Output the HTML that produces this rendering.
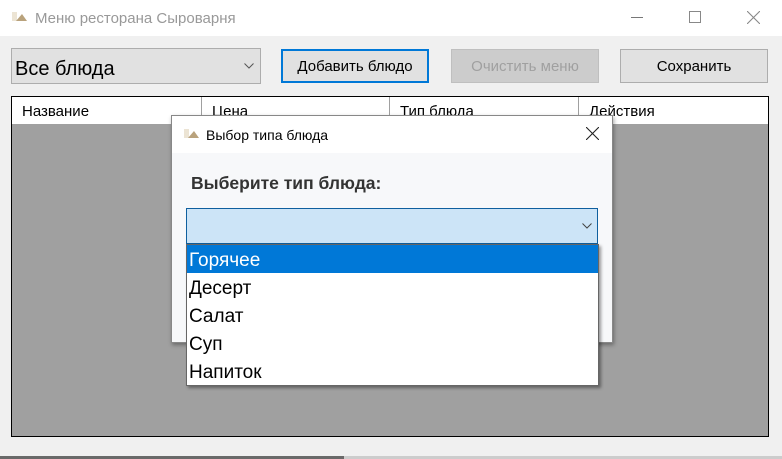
<!DOCTYPE html>
<html><head><meta charset="utf-8"><style>
*{box-sizing:border-box;margin:0;padding:0}
body{width:782px;height:459px;background:#f0f0f0;font-family:"Liberation Sans","DejaVu Sans",sans-serif;position:relative;overflow:hidden}
.a{position:absolute}
.btn{position:absolute;background:#e1e1e1;border:1px solid #adadad;font-size:15px;color:#000;text-align:center;line-height:33px}
.hd{position:absolute;top:0;height:27px;line-height:30px;font-size:15px;padding-left:10px;border-right:1px solid #a0a0a0;white-space:nowrap;overflow:hidden}
.it{height:28px;line-height:32px;font-size:19px;padding-left:2px;color:#000}
</style></head><body>
<div class="a" style="left:0;top:0;width:782px;height:36px;background:#fff"></div>
<svg class="a" style="left:12px;top:11px" width="16" height="12"><rect x="0" y="1" width="5" height="9" fill="#ece4d4"/><polygon points="4,10 10,3 15,10" fill="#b9a27c"/></svg>
<div class="a" style="left:35px;top:10px;font-size:15px;color:#999">Меню ресторана Сыроварня</div>
<div class="a" style="left:631px;top:17px;width:12px;height:1px;background:#777"></div>
<div class="a" style="left:689px;top:11px;width:12px;height:12px;border:1px solid #888"></div>
<svg class="a" style="left:747px;top:11px" width="13" height="13"><path d="M0 0L13 13M13 0L0 13" stroke="#888" stroke-width="1.1"/></svg>

<div class="a" style="left:11px;top:48px;width:250px;height:36px;background:#e1e1e1;border:1px solid #adadad"></div>
<div class="a" style="left:15px;top:58px;font-size:20px">Все блюда</div>
<svg class="a" style="left:244px;top:63px" width="10" height="6"><path d="M0.5 0.5L5 5L9.5 0.5" stroke="#555" fill="none"/></svg>

<div class="btn" style="left:281px;top:49px;width:148px;height:34px;border:2px solid #0078d7;line-height:32px">Добавить блюдо</div>
<div class="btn" style="left:451px;top:49px;width:148px;height:34px;background:#ccc;border-color:#bfbfbf;color:#a0a0a0">Очистить меню</div>
<div class="btn" style="left:620px;top:49px;width:148px;height:34px">Сохранить</div>

<div class="a" style="left:11px;top:96px;width:758px;height:341px;background:#a0a0a0;border:1px solid #000"></div>
<div class="a" style="left:12px;top:97px;width:756px;height:27px;background:#fff">
<div class="hd" style="left:0;width:190px">Название</div>
<div class="hd" style="left:190px;width:188px">Цена</div>
<div class="hd" style="left:378px;width:189px">Тип блюда</div>
<div class="hd" style="left:567px;width:189px;border:none">Действия</div>
</div>

<div class="a" style="left:0;top:456px;width:344px;height:3px;background:#696969"></div>
<div class="a" style="left:344px;top:456px;width:438px;height:3px;background:#ccc"></div>

<div class="a" style="left:171px;top:115px;width:442px;height:228px;background:#f7f8fa;border:1px solid #888;box-shadow:1px 2px 4px rgba(0,0,0,.35)">
<div class="a" style="left:0;top:0;width:440px;height:37px;background:#fff"></div>
<svg class="a" style="left:12px;top:12px" width="16" height="12"><rect x="0" y="1" width="5" height="9" fill="#ece4d4"/><polygon points="4,10 10,3 15,10" fill="#b9a27c"/></svg>
<div class="a" style="left:34px;top:11px;font-size:14px;color:#000">Выбор типа блюда</div>
<svg class="a" style="left:414px;top:11px" width="13" height="13"><path d="M0 0L13 13M13 0L0 13" stroke="#222" stroke-width="1.1"/></svg>
<div class="a" style="left:19px;top:57px;font-size:17.5px;font-weight:bold;color:#333">Выберите тип блюда:</div>
</div>
<div class="a" style="left:186px;top:208px;width:412px;height:36px;background:#cce4f7;border:1px solid #0f5f9e"></div>
<svg class="a" style="left:582px;top:223px" width="10" height="6"><path d="M0.5 0.5L5 5L9.5 0.5" stroke="#444" fill="none"/></svg>
<div class="a" style="left:186px;top:244px;width:413px;height:142px;background:#fff;border:1px solid #666;box-shadow:2px 2px 3px rgba(0,0,0,.4)">
<div class="it" style="background:#0078d7;color:#fff">Горячее</div>
<div class="it">Десерт</div>
<div class="it">Салат</div>
<div class="it">Суп</div>
<div class="it">Напиток</div>
</div>
</body></html>
